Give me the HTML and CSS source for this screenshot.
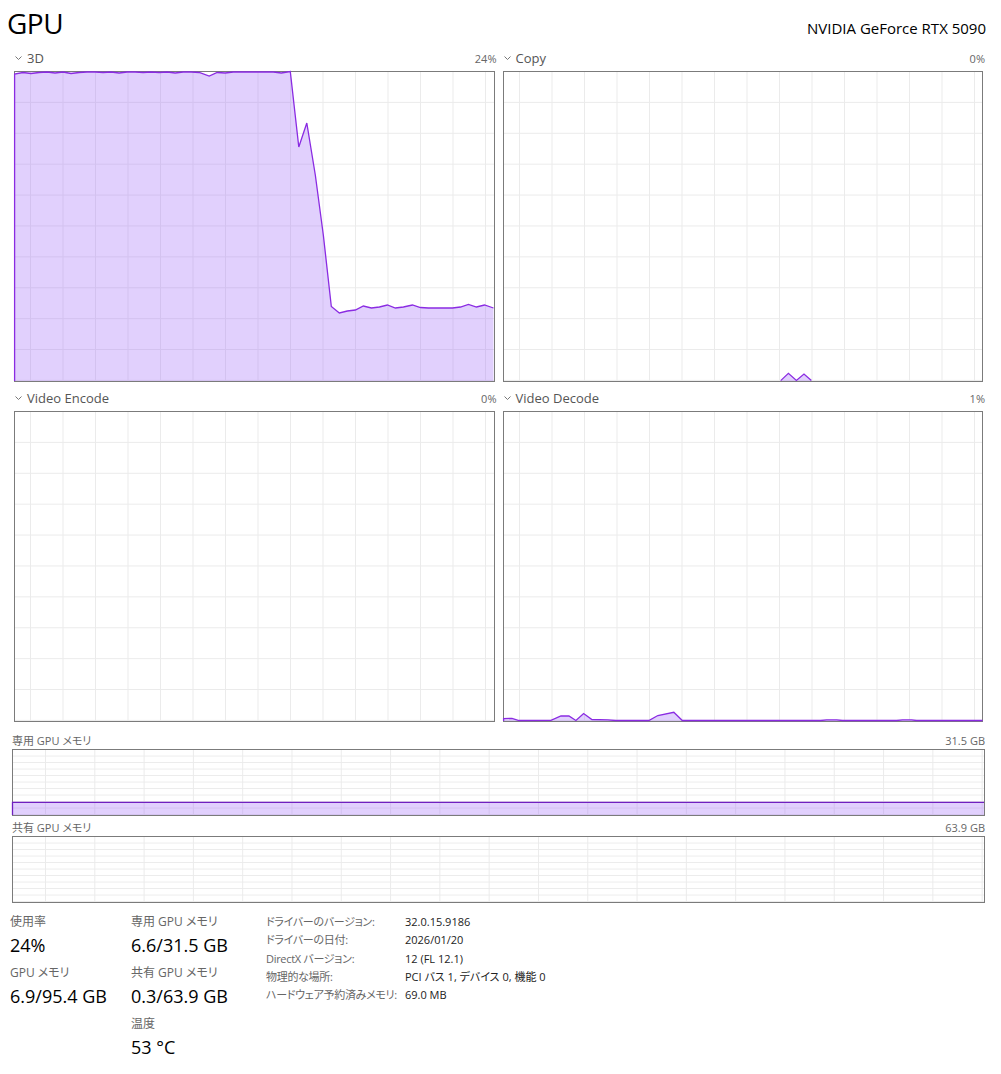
FILE: index.html
```html
<!DOCTYPE html>
<html lang="ja">
<head>
    <meta charset="UTF-8">
    <title>GPU</title>
    <link rel="stylesheet" href="styles.css">
</head>
<body>
<div class="page">
    <header class="head">
        <h1>GPU</h1>
        <div class="gpu-name">NVIDIA GeForce RTX 5090</div>
    </header>

    <div class="engines">
        <section class="engine">
            <div class="engine-head">
                <svg class="chev" width="8" height="5" viewBox="0 0 8 5"><polyline points="0.5,0.5 3.5,3.5 6.5,0.5"/></svg>
                <span class="engine-name">3D</span>
                <span class="engine-pct">24%</span>
            </div>
            <div class="chart">
                <svg viewBox="15 72 478 309" preserveAspectRatio="none">
                    <polygon class="area" points="15,74 23,72.5 31,73.5 39,72.5 47,72 55,73 63,72 71,73.5 79,72.5 87,72 95,72 103,72.5 111,72 119,73 127,72 135,72 143,72.5 151,72 159,72.5 167,72 175,73 183,72 191,72 199,72.5 209,76 217,72.5 225,73 233,72 241,72 249,72 257,72 265,72 273,72 281,73 290,71.5 298.5,147 306.5,123 315,175 323,235 331,306.5 339,313 347,311 355,310 363,306 371,308 379,307 387,305 395,308 403,307 412,305 420,307.5 428,308 436,308 444,308 452,308 460,307 468,304.5 476,307 484,305 493,308 493,381 15,381"/>
                    <polyline class="line" points="14.6,381 14.6,74 23,72.5 31,73.5 39,72.5 47,72 55,73 63,72 71,73.5 79,72.5 87,72 95,72 103,72.5 111,72 119,73 127,72 135,72 143,72.5 151,72 159,72.5 167,72 175,73 183,72 191,72 199,72.5 209,76 217,72.5 225,73 233,72 241,72 249,72 257,72 265,72 273,72 281,73 290,71.5 298.5,147 306.5,123 315,175 323,235 331,306.5 339,313 347,311 355,310 363,306 371,308 379,307 387,305 395,308 403,307 412,305 420,307.5 428,308 436,308 444,308 452,308 460,307 468,304.5 476,307 484,305 493,308"/>
                </svg>
            </div>
        </section>

        <section class="engine">
            <div class="engine-head">
                <svg class="chev" width="8" height="5" viewBox="0 0 8 5"><polyline points="0.5,0.5 3.5,3.5 6.5,0.5"/></svg>
                <span class="engine-name">Copy</span>
                <span class="engine-pct">0%</span>
            </div>
            <div class="chart">
                <svg viewBox="503 72 479 309" preserveAspectRatio="none">
                    <polygon class="area" points="780,381 787.7,373.3 795.7,380.5 803.3,374 810.7,381"/>
                    <polyline class="line" points="780,380.6 787.7,373.3 795.7,380.5 803.3,374 810.7,380.6"/>
                </svg>
            </div>
        </section>

        <section class="engine">
            <div class="engine-head">
                <svg class="chev" width="8" height="5" viewBox="0 0 8 5"><polyline points="0.5,0.5 3.5,3.5 6.5,0.5"/></svg>
                <span class="engine-name">Video Encode</span>
                <span class="engine-pct">0%</span>
            </div>
            <div class="chart"></div>
        </section>

        <section class="engine">
            <div class="engine-head">
                <svg class="chev" width="8" height="5" viewBox="0 0 8 5"><polyline points="0.5,0.5 3.5,3.5 6.5,0.5"/></svg>
                <span class="engine-name">Video Decode</span>
                <span class="engine-pct">1%</span>
            </div>
            <div class="chart">
                <svg viewBox="503 411 479 309" preserveAspectRatio="none">
                    <polygon class="area" points="503,717.7 511,717.3 518,719.5 550,719.3 560,715 568,715 575,719.5 582.7,712.5 591,718.5 607,718.8 615,719.5 648,719.5 657,714.5 673,711.3 681.5,719.5 820,719.5 826,718.8 836,718.8 842,719.5 896,719.5 902,718.8 911,718.8 916,719.5 982,719.5 982,720 503,720"/>
                    <polyline class="line" points="502.6,720 502.6,717.7 511,717.3 518,719.5 550,719.3 560,715 568,715 575,719.5 582.7,712.5 591,718.5 607,718.8 615,719.5 648,719.5 657,714.5 673,711.3 681.5,719.5 820,719.5 826,718.8 836,718.8 842,719.5 896,719.5 902,718.8 911,718.8 916,719.5 982,719.5"/>
                </svg>
            </div>
        </section>
    </div>

    <section class="mem">
        <div class="mem-head">
            <span>専用 GPU メモリ</span>
            <span>31.5 GB</span>
        </div>
        <div class="mem-chart">
            <svg viewBox="0 0 972 65" preserveAspectRatio="none">
                <rect class="area" x="0" y="52.3" width="972" height="12.7"/>
                <polyline class="mem-line" points="-0.5,65 -0.5,52.3 972,52.3"/>
            </svg>
        </div>
    </section>

    <section class="mem mem-shared">
        <div class="mem-head">
            <span>共有 GPU メモリ</span>
            <span>63.9 GB</span>
        </div>
        <div class="mem-chart"></div>
    </section>

    <div class="stats">
        <div class="stat-col">
            <div class="stat-label">使用率</div>
            <div class="stat-value">24%</div>
            <div class="stat-label">GPU メモリ</div>
            <div class="stat-value">6.9/95.4 GB</div>
        </div>
        <div class="stat-col">
            <div class="stat-label">専用 GPU メモリ</div>
            <div class="stat-value">6.6/31.5 GB</div>
            <div class="stat-label">共有 GPU メモリ</div>
            <div class="stat-value">0.3/63.9 GB</div>
            <div class="stat-label">温度</div>
            <div class="stat-value">53 °C</div>
        </div>
        <dl class="props">
            <dt>ドライバーのバージョン:</dt><dd>32.0.15.9186</dd>
            <dt>ドライバーの日付:</dt><dd>2026/01/20</dd>
            <dt>DirectX バージョン:</dt><dd>12 (FL 12.1)</dd>
            <dt>物理的な場所:</dt><dd>PCI バス 1, デバイス 0, 機能 0</dd>
            <dt>ハードウェア予約済みメモリ:</dt><dd>69.0 MB</dd>
        </dl>
    </div>
</div>
</body>
</html>
```

FILE: styles.css
```css
body {
    margin: 0;
    background: #fff;
    font-family: "Open Sans", "Noto Sans CJK JP", sans-serif;
    font-feature-settings: "palt";
    color: #000;
}
.page {
    width: 1001px;
    box-sizing: border-box;
    padding: 0 16px 0 12px;
}
.head {
    height: 50px;
    display: flex;
    justify-content: space-between;
    align-items: baseline;
}
.head h1 {
    margin: 0 0 0 -5px;
    font-size: 28px;
    font-weight: normal;
    line-height: 46px;
    letter-spacing: -0.5px;
}
.gpu-name {
    font-size: 15px;
    margin-right: -1px;
    color: #000;
}
.engines {
    margin: 0 2px;
    display: grid;
    grid-template-columns: 1fr 1fr;
    gap: 8px;
}
.engine-head {
    height: 16px;
    padding-bottom: 5px;
    display: flex;
    align-items: center;
}
.chev {
    margin: 1px 4px 0 1px;
    fill: none;
    stroke: #777;
    stroke-width: 1;
}
.engine-name {
    font-size: 13px;
    color: #555;
    flex: 1;
}
.engine-pct {
    font-size: 11px;
    color: #666;
    margin-right: -2px;
}
.chart {
    height: 309px;
    border: 1px solid #7b7b7b;
    background-color: #fff;
    background-image:
        linear-gradient(to right, #ebebeb 1px, transparent 1px),
        linear-gradient(to top, #ebebeb 1px, transparent 1px);
    background-size: 32.5px 100%, 100% 30.9px;
    background-position: 15px 0, 0 0;
}
.chart svg, .mem-chart svg {
    display: block;
    width: 100%;
    height: 100%;
    overflow: visible;
}
.area {
    fill: rgba(155, 98, 248, 0.3);
}
.line {
    fill: none;
    stroke: #8a2be2;
    stroke-width: 1.3;
    vector-effect: non-scaling-stroke;
}
.mem {
    margin-top: 11px;
}
.mem-shared {
    margin-top: 4px;
}
.mem-head {
    height: 14px;
    padding-bottom: 2px;
    display: flex;
    justify-content: space-between;
    align-items: center;
    font-size: 11px;
    color: #666;
}
.mem-chart {
    height: 65px;
    border: 1px solid #7b7b7b;
    background-image:
        linear-gradient(to right, #ebebeb 1px, transparent 1px),
        linear-gradient(to top, #ebebeb 1px, transparent 1px);
    background-size: 49.3px 100%, 100% 6.5px;
    background-position: 32px 0, 0 0;
}
.mem-line {
    fill: none;
    stroke: #7020c0;
    stroke-width: 1.3;
    vector-effect: non-scaling-stroke;
}
.stats {
    margin: 10px 0 0 -2px;
    display: flex;
    align-items: flex-start;
}
.stat-col {
    width: 121px;
}
.stat-col + .stat-col {
    width: 135px;
}
.stat-label {
    font-size: 12px;
    line-height: 17px;
    margin-bottom: 2px;
    color: #666;
}
.stat-value {
    font-size: 18px;
    line-height: 26px;
    margin-bottom: 6px;
}
.props {
    margin: 0;
    display: grid;
    grid-template-columns: 139px auto;
    font-size: 11px;
    line-height: 18.3px;
}
.props dt {
    color: #666;
    white-space: nowrap;
    letter-spacing: -0.3px;
}
.props dd {
    margin: 0;
    color: #222;
}
```
